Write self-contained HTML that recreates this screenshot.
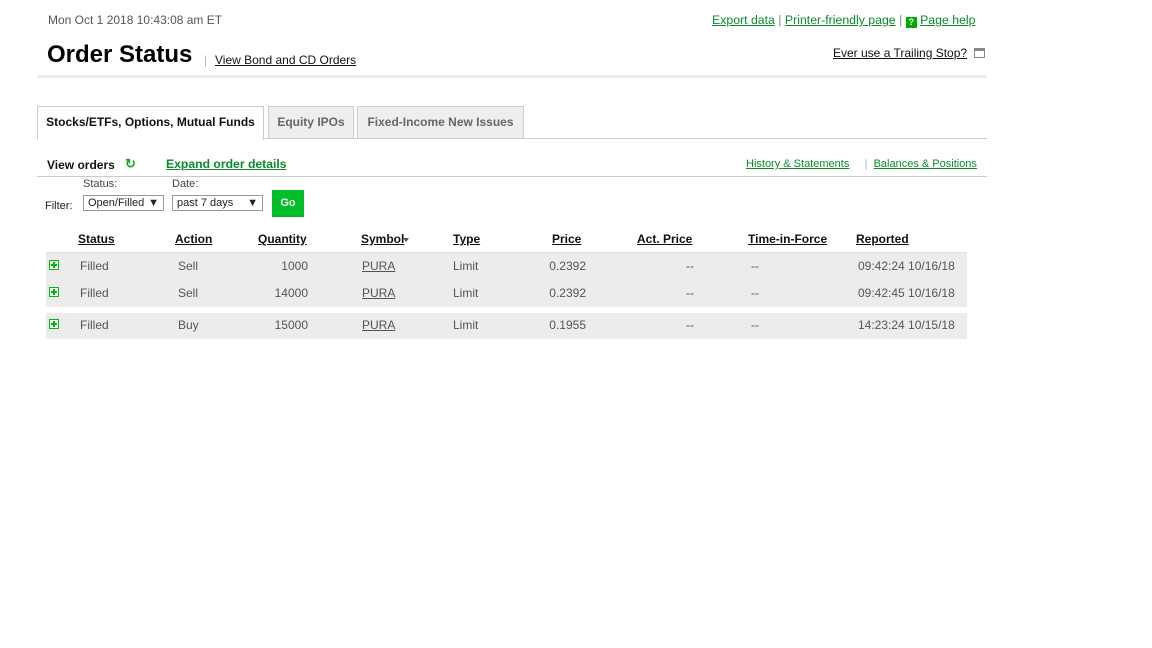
<!DOCTYPE html>
<html><head><style>
body{margin:0;background:#fff;font-family:"Liberation Sans",Arial,sans-serif;width:1152px;height:648px;position:relative;overflow:hidden;color:#333}
.a{position:absolute;white-space:nowrap}
.g{color:#0a8a2a;text-decoration:underline}
.k{color:#111;text-decoration:underline}
.s{font-size:12px}
.h{font-size:12px;font-weight:bold;color:#111;text-decoration:underline}
.c{font-size:12px;color:#555}
.plus{position:absolute;width:8px;height:8px;border:1px solid #0b0;background:#fff}
.plus:before{content:"";position:absolute;left:1px;top:3px;width:6px;height:2px;background:#0b0}
.plus:after{content:"";position:absolute;left:3px;top:1px;width:2px;height:6px;background:#0b0}
</style></head><body>
<div class="a" style="left:48px;top:13px;font-size:12px;color:#555">Mon Oct 1 2018 10:43:08 am ET</div>
<div class="a" style="left:47px;top:41px;font-size:24px;font-weight:bold;color:#000">Order Status</div>
<div class="a" style="left:204px;top:53px;font-size:12px;color:#9bc">|</div>
<div class="a k" style="left:215px;top:53px;font-size:12px">View Bond and CD Orders</div>
<div class="a" style="left:712px;top:13px;color:#888;font-size:12.3px"><span class="g">Export data</span> | <span class="g">Printer-friendly page</span> | <span style="display:inline-block;width:11px;height:11px;background:#0a0;color:#fff;font-size:9px;font-weight:bold;text-align:center;line-height:11px;vertical-align:-1px">?</span> <span class="g">Page help</span></div>
<div class="a k s" style="left:833px;top:46px">Ever use a Trailing Stop?</div>
<div class="a" style="left:974px;top:48px;width:9px;height:6px;border:1px solid #888;border-top:3px solid #888"></div>
<div class="a" style="left:37px;top:75px;width:950px;height:3px;background:#eee"></div>
<div class="a" style="left:37px;top:138px;width:950px;height:1px;background:#ccc"></div>
<div class="a" style="left:37px;top:106px;width:225px;height:33px;border:1px solid #ccc;border-bottom:none;background:#fff;font-size:12px;font-weight:bold;color:#111;line-height:31px;text-align:center">Stocks/ETFs, Options, Mutual Funds</div>
<div class="a" style="left:268px;top:106px;width:84px;height:31px;border:1px solid #ccc;background:#eee;font-size:12px;font-weight:bold;color:#666;line-height:31px;text-align:center">Equity IPOs</div>
<div class="a" style="left:357px;top:106px;width:165px;height:31px;border:1px solid #ccc;background:#eee;font-size:12px;font-weight:bold;color:#666;line-height:31px;text-align:center">Fixed-Income New Issues</div>
<div class="a" style="left:47px;top:158px;font-size:12px;font-weight:bold;color:#111">View orders</div>
<div class="a" style="left:125px;top:156px;font-size:13px;color:#1a2;font-weight:bold">&#x21bb;</div>
<div class="a g" style="left:166px;top:157px;font-size:12.2px;font-weight:bold">Expand order details</div>
<div class="a" style="left:746px;top:158px;font-size:11px;color:#9bc"><span class="g">History &amp; Statements</span> &nbsp;&nbsp;&nbsp; | &nbsp;<span class="g">Balances &amp; Positions</span></div>
<div class="a" style="left:37px;top:176px;width:950px;height:1px;background:#ccc"></div>
<div class="a" style="left:83px;top:178px;font-size:11px;color:#444">Status:</div>
<div class="a" style="left:172px;top:178px;font-size:11px;color:#444">Date:</div>
<div class="a" style="left:45px;top:200px;font-size:11px;color:#222">Filter:</div>
<div class="a" style="left:83px;top:195px;width:75px;height:14px;border:1px solid #999;font-size:11px;color:#222;line-height:14px;padding-left:4px">Open/Filled<span style="position:absolute;right:4px">▼</span></div>
<div class="a" style="left:172px;top:195px;width:85px;height:14px;border:1px solid #999;font-size:11px;color:#222;line-height:14px;padding-left:4px">past 7 days<span style="position:absolute;right:4px">▼</span></div>
<div class="a" style="left:272px;top:190px;width:32px;height:27px;background:#00c02a;color:#fff;font-size:11px;font-weight:bold;text-align:center;line-height:27px">Go</div>
<div class="a h" style="left:78px;top:232px">Status</div>
<div class="a h" style="left:175px;top:232px">Action</div>
<div class="a h" style="left:258px;top:232px">Quantity</div>
<div class="a h" style="left:361px;top:232px">Symbol</div>
<div class="a" style="left:403px;top:238px;width:0;height:0;border-left:3px solid transparent;border-right:3px solid transparent;border-top:4px solid #555"></div>
<div class="a h" style="left:453px;top:232px">Type</div>
<div class="a h" style="left:552px;top:232px">Price</div>
<div class="a h" style="left:637px;top:232px">Act. Price</div>
<div class="a h" style="left:748px;top:232px">Time-in-Force</div>
<div class="a h" style="left:856px;top:232px">Reported</div>
<div class="a" style="left:46px;top:252px;width:921px;height:54px;background:#ececec;border-top:1px solid #ddd"></div>
<div class="a" style="left:46px;top:313px;width:921px;height:26px;background:#ececec"></div>

<div class="plus" style="left:49px;top:260px"></div>
<div class="a c" style="left:80px;top:259px">Filled</div><div class="a c" style="left:178px;top:259px">Sell</div><div class="a c" style="left:240px;top:259px;width:68px;text-align:right">1000</div><div class="a c" style="left:362px;top:259px;text-decoration:underline">PURA</div><div class="a c" style="left:453px;top:259px">Limit</div><div class="a c" style="left:520px;top:259px;width:66px;text-align:right">0.2392</div><div class="a c" style="left:686px;top:259px">--</div><div class="a c" style="left:751px;top:259px">--</div><div class="a c" style="left:858px;top:259px">09:42:24 10/16/18</div>

<div class="plus" style="left:49px;top:287px"></div>
<div class="a c" style="left:80px;top:286px">Filled</div><div class="a c" style="left:178px;top:286px">Sell</div><div class="a c" style="left:240px;top:286px;width:68px;text-align:right">14000</div><div class="a c" style="left:362px;top:286px;text-decoration:underline">PURA</div><div class="a c" style="left:453px;top:286px">Limit</div><div class="a c" style="left:520px;top:286px;width:66px;text-align:right">0.2392</div><div class="a c" style="left:686px;top:286px">--</div><div class="a c" style="left:751px;top:286px">--</div><div class="a c" style="left:858px;top:286px">09:42:45 10/16/18</div>

<div class="plus" style="left:49px;top:319px"></div>
<div class="a c" style="left:80px;top:318px">Filled</div><div class="a c" style="left:178px;top:318px">Buy</div><div class="a c" style="left:240px;top:318px;width:68px;text-align:right">15000</div><div class="a c" style="left:362px;top:318px;text-decoration:underline">PURA</div><div class="a c" style="left:453px;top:318px">Limit</div><div class="a c" style="left:520px;top:318px;width:66px;text-align:right">0.1955</div><div class="a c" style="left:686px;top:318px">--</div><div class="a c" style="left:751px;top:318px">--</div><div class="a c" style="left:858px;top:318px">14:23:24 10/15/18</div>
</body></html>
